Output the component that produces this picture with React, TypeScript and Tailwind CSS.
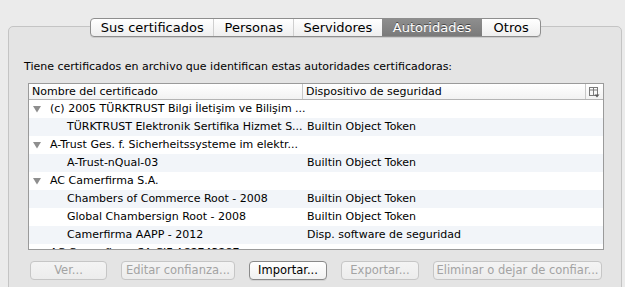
import React from "react";

const font = { fontFamily: '"DejaVu Sans", "Liberation Sans", sans-serif' };

type Row = { name: string; device?: string; group?: boolean };

const rows: Row[] = [
  { name: "(c) 2005 TÜRKTRUST Bilgi İletişim ve Bilişim ...", group: true },
  { name: "TÜRKTRUST Elektronik Sertifika Hizmet S...", device: "Builtin Object Token" },
  { name: "A-Trust Ges. f. Sicherheitssysteme im elektr...", group: true },
  { name: "A-Trust-nQual-03", device: "Builtin Object Token" },
  { name: "AC Camerfirma S.A.", group: true },
  { name: "Chambers of Commerce Root - 2008", device: "Builtin Object Token" },
  { name: "Global Chambersign Root - 2008", device: "Builtin Object Token" },
  { name: "Camerfirma AAPP - 2012", device: "Disp. software de seguridad" },
  { name: "AC Camerfirma SA CIF A82743287", group: true },
];

const tabs = [
  { label: "Sus certificados", w: "w-[123px]" },
  { label: "Personas", w: "w-[80px]" },
  { label: "Servidores", w: "w-[89px]" },
  { label: "Autoridades", w: "w-[101px]", active: true },
  { label: "Otros", w: "w-[58px]" },
];

function Triangle() {
  return (
    <svg width="8" height="8" viewBox="0 0 8 8" className="shrink-0">
      <polygon points="0,1 8,1 4,7.5" fill="#8e8e8e" />
    </svg>
  );
}

function ColIcon() {
  return (
    <svg width="11" height="11" viewBox="0 0 11 11">
      <rect x="0.5" y="0.5" width="8" height="8" fill="none" stroke="#7a7a7a" />
      <line x1="0.5" y1="3" x2="8.5" y2="3" stroke="#7a7a7a" />
      <line x1="4.5" y1="0.5" x2="4.5" y2="8.5" stroke="#7a7a7a" />
      <polygon points="5.5,7.5 10.5,7.5 8,10.5" fill="#5a5a5a" />
    </svg>
  );
}

function Btn({ label, w, enabled }: { label: string; w: string; enabled?: boolean }) {
  return (
    <div
      className={`${w} h-[19px] rounded-[4px] border flex items-center justify-center text-[11.5px] ${
        enabled
          ? "border-[#8a8a8a] bg-gradient-to-b from-white to-[#f1f1f1] text-black shadow-[0_1px_0_rgba(0,0,0,0.08)]"
          : "border-[#c6c6c6] bg-gradient-to-b from-[#f4f4f4] to-[#ececec] text-[#a3a3a3]"
      }`}
    >
      {label}
    </div>
  );
}

export default function App() {
  return (
    <div className="w-[625px] h-[287px] overflow-hidden bg-[#ebebeb] pt-[18px]" style={font}>
      <div className="relative z-10 ml-[90px] flex h-[19px] w-[451px] rounded-[4px] border border-[#8e8e8e] bg-gradient-to-b from-white to-[#eeeeee] overflow-hidden shadow-[0_1px_0_rgba(0,0,0,0.1)]">
        {tabs.map((t, i) => (
          <div
            key={t.label}
            className={`${t.w} h-full flex items-center justify-center text-[13px] leading-none ${
              t.active
                ? "bg-gradient-to-b from-[#8e8e8e] to-[#7a7a7a] text-white [text-shadow:0_-1px_0_rgba(0,0,0,0.5)]"
                : "text-black"
            } ${i > 0 && !t.active && !tabs[i - 1].active ? "border-l border-[#cfcfcf]" : ""}`}
          >
            {t.label}
          </div>
        ))}
      </div>
      <div className="-mt-[11px] ml-[8px] w-[614px] h-[300px] rounded-[5px] border border-[#c4c4c4] bg-[#e4e4e4] pt-[33px] pl-[15px]">
        <div className="text-[11px] leading-[14px] text-black">
          Tiene certificados en archivo que identifican estas autoridades certificadoras:
        </div>
        <div className="mt-[9px] ml-[4px] w-[576px] h-[167px] border border-[#9a9a9a] bg-white overflow-hidden">
          <div className="flex h-[16px] border-b border-[#b4b4b4] bg-gradient-to-b from-white to-[#f2f2f2] text-[11px] leading-[15px] text-black">
            <div className="w-[274px] pl-[3px] border-r border-[#c8c8c8]">Nombre del certificado</div>
            <div className="w-[283px] pl-[3px] border-r border-[#c8c8c8]">Dispositivo de seguridad</div>
            <div className="flex-1 flex items-center justify-center pt-[1px]">
              <ColIcon />
            </div>
          </div>
          {rows.map((r, i) => (
            <div
              key={i}
              className={`flex h-[18px] items-center text-[11px] text-black ${
                i % 2 === 1 ? "bg-[#f2f5f9]" : "bg-white"
              }`}
            >
              {r.group ? (
                <div className="w-[274px] flex items-center pl-[4px] gap-[9px]">
                  <Triangle />
                  <span className="whitespace-nowrap">{r.name}</span>
                </div>
              ) : (
                <div className="w-[274px] pl-[38px] whitespace-nowrap">{r.name}</div>
              )}
              <div className="pl-[4px] whitespace-nowrap">{r.device ?? ""}</div>
            </div>
          ))}
        </div>
        <div className="mt-[11px] ml-[6px] flex gap-[14px]">
          <Btn label="Ver..." w="w-[77px]" />
          <Btn label="Editar confianza..." w="w-[114px]" />
          <Btn label="Importar..." w="w-[78px]" enabled />
          <Btn label="Exportar..." w="w-[78px]" />
          <Btn label="Eliminar o dejar de confiar..." w="w-[169px]" />
        </div>
      </div>
    </div>
  );
}
